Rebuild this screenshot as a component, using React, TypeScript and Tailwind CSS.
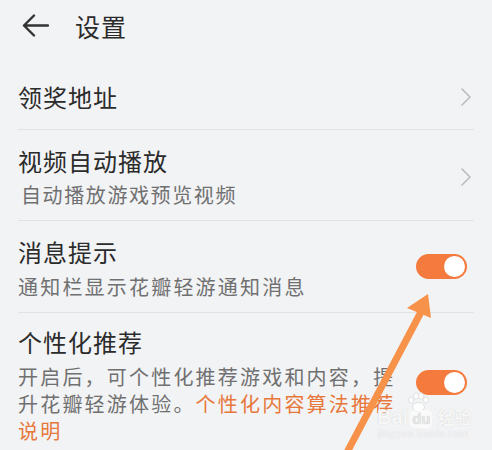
import React from "react";

const font = { fontFamily: '"Noto Sans CJK SC", "Noto Sans", sans-serif' };

function Chevron() {
  return (
    <svg width="12" height="20" viewBox="0 0 12 20" className="shrink-0">
      <path d="M2 2 L10 10 L2 18" fill="none" stroke="#b9bbbe" strokeWidth="1.6" strokeLinecap="round" strokeLinejoin="round" />
    </svg>
  );
}

function Toggle() {
  return (
    <div className="w-[51px] h-[25px] rounded-full bg-[#f47b3d] flex items-center justify-end pr-[2px] shrink-0">
      <div className="w-[21px] h-[21px] rounded-full bg-white" />
    </div>
  );
}

export default function App() {
  return (
    <div className="relative w-[492px] h-[450px] overflow-hidden bg-[#f2f3f5] text-[#2b2b2b]" style={font}>
      <div className="h-[50px] flex items-center">
        <div className="pl-[22px] w-[75px]">
          <svg width="27" height="23" viewBox="0 0 27 23">
            <path d="M12 1.5 L2 11.5 L12 21.5 M2 11.5 H26" fill="none" stroke="#333" strokeWidth="2.4" strokeLinecap="round" strokeLinejoin="round" />
          </svg>
        </div>
        <div className="text-[25px] leading-[32px] tracking-[1px] mt-[1px]">设置</div>
      </div>

      <div className="px-[18px]">
        <div className="flex items-center justify-between border-b border-[#e1e2e4] pt-[31px] pb-[16px] pr-[2px]">
          <div className="text-[24px] leading-[32px] tracking-[1px]">领奖地址</div>
          <Chevron />
        </div>

        <div className="flex items-center justify-between border-b border-[#e1e2e4] pt-[15px] pb-[11px] pr-[2px]">
          <div>
            <div className="text-[24px] leading-[32px] tracking-[1px]">视频自动播放</div>
            <div className="mt-[4px] text-[20px] leading-[28px] tracking-[1.6px] text-[#707070] pl-[3px]">自动播放游戏预览视频</div>
          </div>
          <Chevron />
        </div>

        <div className="flex items-center justify-between border-b border-[#e1e2e4] pt-[15px] pb-[11px] pr-[7px]">
          <div>
            <div className="text-[24px] leading-[32px] tracking-[1px]">消息提示</div>
            <div className="mt-[5px] text-[20px] leading-[28px] tracking-[2.2px] text-[#707070]">通知栏显示花瓣轻游通知消息</div>
          </div>
          <div className="-mt-[4px]">
            <Toggle />
          </div>
        </div>

        <div className="flex items-start justify-between pt-[13px] pr-[7px]">
          <div>
            <div className="text-[24px] leading-[32px] tracking-[1px]">个性化推荐</div>
            <div className="mt-[5px] text-[20px] leading-[27px] tracking-[2.2px] text-[#707070] whitespace-nowrap">
              开启后，可个性化推荐游戏和内容，提
              <br />
              升花瓣轻游体验。<span className="text-[#e8773b]">个性化内容算法推荐</span>
              <br />
              <span className="text-[#e8773b]">说明</span>
            </div>
          </div>
          <div className="mt-[44px]">
            <Toggle />
          </div>
        </div>
      </div>

      {/* Baidu watermark */}
      <div className="absolute left-[377px] top-[392px] w-[100px] h-[50px] text-white/85 pointer-events-none" style={{ fontFamily: '"Liberation Sans", sans-serif', textShadow: "0 0 1px #c4c4c4" }}>
        <svg width="26" height="20" viewBox="0 0 26 20" className="absolute left-[28px] top-[0px]">
          <g fill="#ffffff" fillOpacity="0.85" stroke="#d0d0d0" strokeWidth="0.6">
            <ellipse cx="6" cy="8" rx="2.5" ry="3.2" />
            <ellipse cx="11" cy="4" rx="2.5" ry="3.2" />
            <ellipse cx="16" cy="4" rx="2.5" ry="3.2" />
            <ellipse cx="21" cy="8" rx="2.5" ry="3.2" />
            <ellipse cx="13.5" cy="15" rx="6" ry="4.5" />
          </g>
        </svg>
        <div className="absolute left-0 top-[14px] flex items-end gap-[2px] text-[20px] leading-[22px] font-bold">
          <span>Bai</span>
          <span className="text-[15px] leading-[18px] bg-white/60 rounded-[5px] px-[2px] text-[#e6e6e6]">du</span>
          <span className="text-[17px] ml-[3px]" style={font}>经验</span>
        </div>
        <div className="absolute left-[1px] top-[36px] text-[10px] leading-[12px] tracking-[0.6px]">jingyan.baidu.com</div>
      </div>

      {/* Orange annotation arrow */}
      <svg className="absolute left-0 top-0 pointer-events-none" width="492" height="450" viewBox="0 0 492 450">
        <line x1="344" y1="458" x2="421" y2="312" stroke="#f7924a" strokeWidth="7" strokeLinecap="round" />
        <polygon points="428,294 407,308 431,318" fill="#f7924a" />
      </svg>
    </div>
  );
}
